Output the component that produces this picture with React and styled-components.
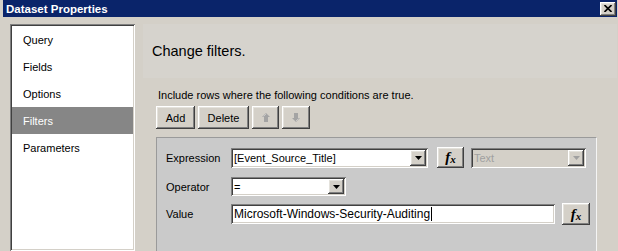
import styled, { createGlobalStyle } from "styled-components";

const GlobalStyle = createGlobalStyle`
  html, body {
    margin: 0;
    padding: 0;
    background: #d4d0c8;
    overflow: hidden;
  }
  body {
    font-family: "Liberation Sans", Arial, sans-serif;
    color: #000000;
  }
`;

const raised = `
  box-shadow: inset -1px -1px #404040, inset 1px 1px #ffffff,
    inset -2px -2px #808080, inset 2px 2px #e4e2dc;
`;

const sunken = `
  box-shadow: inset 1px 1px #808080, inset -1px -1px #ffffff,
    inset 2px 2px #404040, inset -2px -2px #d4d0c8;
`;

const Window = styled.div`
  width: 618px;
  height: 251px;
  box-sizing: border-box;
  padding: 0 1px 0 3px;
  display: flex;
  flex-direction: column;
  background: #d4d0c8;
  overflow: hidden;
`;

const TitleBar = styled.div`
  height: 17px;
  flex-shrink: 0;
  display: flex;
  align-items: center;
  justify-content: space-between;
  padding: 0 1px 0 3px;
  background: #0a246a;
  color: #ffffff;
  font-weight: bold;
  font-size: 11.5px;
`;

const CloseButton = styled.div`
  width: 16px;
  height: 14px;
  display: flex;
  align-items: center;
  justify-content: center;
  background: #d4d0c8;
  ${raised}
`;

const Body = styled.div`
  flex: 1;
  min-height: 0;
  display: flex;
  padding: 7px 0 0 7px;
`;

const NavList = styled.div`
  width: 125px;
  flex-shrink: 0;
  box-sizing: border-box;
  padding: 2px;
  background: #ffffff;
  ${sunken}
`;

const NavItem = styled.div`
  height: 27px;
  display: flex;
  align-items: center;
  padding-left: 11px;
  font-size: 11px;
  background: ${(p) => (p.$active ? "#868686" : "transparent")};
  color: ${(p) => (p.$active ? "#ffffff" : "#000000")};
`;

const Main = styled.div`
  flex: 1;
  display: flex;
  flex-direction: column;
  padding-left: 8px;
`;

const Header = styled.div`
  height: 54px;
  flex-shrink: 0;
  display: flex;
  align-items: center;
  padding-left: 9px;
  font-size: 14.5px;
  background: #d6d3cd;
`;

const Content = styled.div`
  flex: 1;
  display: flex;
  flex-direction: column;
  padding: 0 20px 0 13px;
`;

const Caption = styled.div`
  margin-top: 10px;
  line-height: 14px;
  padding-left: 2px;
  font-size: 11px;
`;

const Toolbar = styled.div`
  margin-top: 4px;
  display: flex;
  gap: 3px;
`;

const ToolButton = styled.div`
  width: ${(p) => p.$w}px;
  height: 23px;
  box-sizing: border-box;
  display: flex;
  align-items: center;
  justify-content: center;
  font-size: 11px;
  background: #d4d0c8;
  ${raised}
`;

const FilterPanel = styled.div`
  margin-top: 8px;
  flex: 1;
  padding: 9px 0 0 9px;
  background: #cacaca;
  border-top: 1px solid #9a9a9a;
  border-left: 1px solid #9a9a9a;
  border-right: 1px solid #f4f4f4;
`;

const FieldRow = styled.div`
  display: flex;
  align-items: center;
  height: ${(p) => p.$h}px;
  margin-top: ${(p) => p.$top || 0}px;
`;

const Label = styled.div`
  width: 65px;
  flex-shrink: 0;
  font-size: 11px;
`;

const Combo = styled.div`
  width: ${(p) => p.$w}px;
  height: ${(p) => p.$h}px;
  margin-left: ${(p) => p.$gap || 0}px;
  box-sizing: border-box;
  display: flex;
  align-items: center;
  padding: 2px;
  background: ${(p) => (p.$disabled ? "#d4d0c8" : "#ffffff")};
  color: ${(p) => (p.$disabled ? "#a0a0a0" : "#000000")};
  ${sunken}
`;

const ComboText = styled.div`
  flex: 1;
  padding-left: 1px;
  font-size: 11px;
  white-space: nowrap;
  overflow: hidden;
`;

const DropButton = styled.div`
  width: 16px;
  align-self: stretch;
  display: flex;
  align-items: center;
  justify-content: center;
  background: #d4d0c8;
  ${raised}
`;

const TextBox = styled.div`
  width: 324px;
  height: 20px;
  box-sizing: border-box;
  display: flex;
  align-items: center;
  padding: 0 3px;
  background: #ffffff;
  font-size: 12px;
  white-space: nowrap;
  ${sunken}
`;

const Caret = styled.span`
  width: 1px;
  height: 14px;
  margin-left: 1px;
  background: #000000;
`;

const FxButton = styled.div`
  width: ${(p) => p.$w}px;
  height: ${(p) => p.$h}px;
  margin-left: ${(p) => p.$gap}px;
  box-sizing: border-box;
  display: flex;
  align-items: center;
  justify-content: center;
  font-family: "Liberation Serif", "Times New Roman", serif;
  font-weight: bold;
  font-style: italic;
  font-size: 15px;
  background: #d4d0c8;
  ${raised}
  & > small {
    font-size: 11px;
    margin-top: 3px;
  }
`;

const Arrow = ({ disabled }) => (
  <svg width="7" height="4" viewBox="0 0 7 4">
    <polygon points="0,0 7,0 3.5,4" fill={disabled ? "#a0a0a0" : "#000000"} />
  </svg>
);

const MoveIcon = ({ down }) => (
  <svg width="8" height="9" viewBox="0 0 8 9" style={down ? { transform: "rotate(180deg)" } : undefined}>
    <path d="M4 0 L8 4 L6 4 L6 9 L2 9 L2 4 L0 4 Z" fill="#a4a4a4" />
    <path d="M4 1 L1.5 3.5" stroke="#c8c8c8" strokeWidth="1" />
  </svg>
);

const navItems = ["Query", "Fields", "Options", "Filters", "Parameters"];

export default function App() {
  return (
    <>
      <GlobalStyle />
      <Window>
        <TitleBar>
          <span>Dataset Properties</span>
          <CloseButton>
            <svg width="8" height="7" viewBox="0 0 8 7">
              <path d="M0.5 0 L7.5 7 M7.5 0 L0.5 7" stroke="#000" strokeWidth="1.6" />
            </svg>
          </CloseButton>
        </TitleBar>
        <Body>
          <NavList>
            {navItems.map((item) => (
              <NavItem key={item} $active={item === "Filters"}>
                {item}
              </NavItem>
            ))}
          </NavList>
          <Main>
            <Header>Change filters.</Header>
            <Content>
              <Caption>Include rows where the following conditions are true.</Caption>
              <Toolbar>
                <ToolButton $w={39}>Add</ToolButton>
                <ToolButton $w={51}>Delete</ToolButton>
                <ToolButton $w={27}>
                  <MoveIcon />
                </ToolButton>
                <ToolButton $w={28}>
                  <MoveIcon down />
                </ToolButton>
              </Toolbar>
              <FilterPanel>
                <FieldRow $h={21}>
                  <Label>Expression</Label>
                  <Combo $w={197} $h={20}>
                    <ComboText>[Event_Source_Title]</ComboText>
                    <DropButton>
                      <Arrow />
                    </DropButton>
                  </Combo>
                  <FxButton $w={27} $h={21} $gap={9}>
                    f<small>x</small>
                  </FxButton>
                  <Combo $w={115} $h={20} $gap={7} $disabled>
                    <ComboText>Text</ComboText>
                    <DropButton>
                      <Arrow disabled />
                    </DropButton>
                  </Combo>
                </FieldRow>
                <FieldRow $h={19} $top={9}>
                  <Label>Operator</Label>
                  <Combo $w={115} $h={19}>
                    <ComboText>=</ComboText>
                    <DropButton>
                      <Arrow />
                    </DropButton>
                  </Combo>
                </FieldRow>
                <FieldRow $h={22} $top={7}>
                  <Label>Value</Label>
                  <TextBox>
                    Microsoft-Windows-Security-Auditing
                    <Caret />
                  </TextBox>
                  <FxButton $w={28} $h={22} $gap={7}>
                    f<small>x</small>
                  </FxButton>
                </FieldRow>
              </FilterPanel>
            </Content>
          </Main>
        </Body>
      </Window>
    </>
  );
}
